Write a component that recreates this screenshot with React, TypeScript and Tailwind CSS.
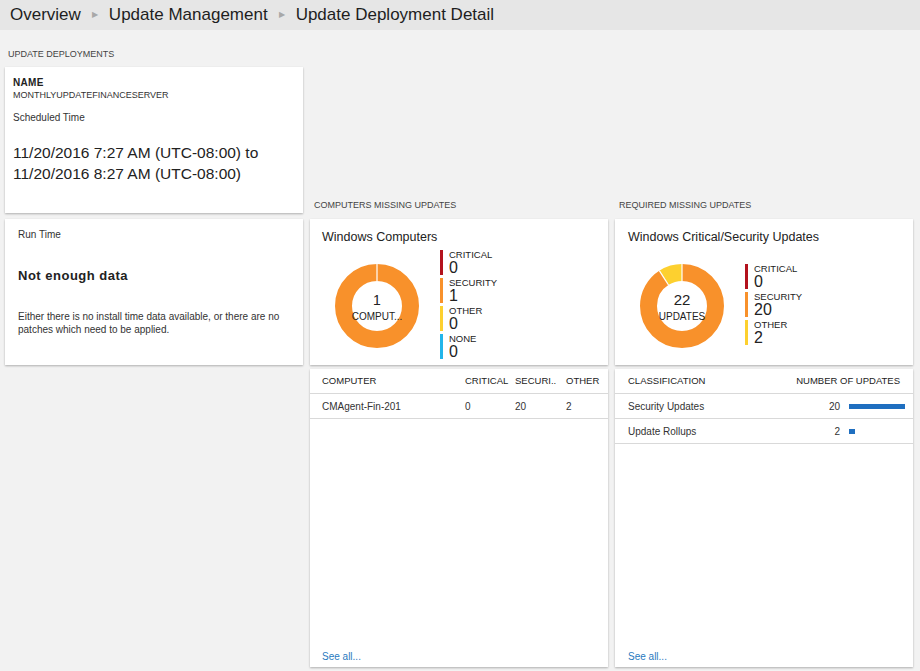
import React from 'react';

const ORANGE = '#f8912b';
const RED = '#b3121d';
const YELLOW = '#fdd02f';
const BLUE = '#22b5ea';

interface Segment {
  value: number;
  color: string;
}

const Donut: React.FC<{ segments: Segment[]; big: string; small: string; bigSize: string }> = ({
  segments,
  big,
  small,
  bigSize,
}) => {
  const r = 33.5;
  const c = 2 * Math.PI * r;
  const total = segments.reduce((s, x) => s + x.value, 0);
  let offset = 0;
  return (
    <div className="relative h-[84px] w-[84px] shrink-0">
      <svg width="84" height="84" viewBox="0 0 84 84" className="-rotate-90">
        {segments.map((seg, i) => {
          const len = (seg.value / total) * c;
          const el = (
            <circle
              key={i}
              cx="42"
              cy="42"
              r={r}
              fill="none"
              stroke={seg.color}
              strokeWidth="17"
              strokeDasharray={`${len} ${c - len}`}
              strokeDashoffset={-offset}
            />
          );
          offset += len;
          return el;
        })}
        {/* separators */}
        {(() => {
          let acc = 0;
          return segments.map((seg, i) => {
            const a = (acc / total) * 2 * Math.PI;
            acc += seg.value;
            return (
              <line
                key={i}
                x1={42 + 25 * Math.cos(a)}
                y1={42 + 25 * Math.sin(a)}
                x2={42 + 42 * Math.cos(a)}
                y2={42 + 42 * Math.sin(a)}
                stroke="#fff"
                strokeWidth="1.2"
              />
            );
          });
        })()}
      </svg>
      <div className="absolute inset-0 flex flex-col items-center justify-center pt-[2px] text-[#222]">
        <div className={`${bigSize} leading-[16px]`}>{big}</div>
        <div className="mt-[3px] text-[10px] leading-[12px]">{small}</div>
      </div>
    </div>
  );
};

const LegendItem: React.FC<{ label: string; value: number; color: string }> = ({ label, value, color }) => (
  <div className="flex h-[28px] items-start">
    <div className="h-[25px] w-[3px]" style={{ backgroundColor: color }} />
    <div className="ml-[6px] flex flex-col text-[#222]">
      <span className="text-[9.5px] leading-[10px]">{label}</span>
      <span className="text-[16px] leading-[15px]">{value}</span>
    </div>
  </div>
);

const Card: React.FC<{ className?: string; children: React.ReactNode }> = ({ className = '', children }) => (
  <div className={`bg-white shadow-[0_1px_2px_rgba(0,0,0,0.28)] ${className}`}>{children}</div>
);

const SectionLabel: React.FC<{ children: React.ReactNode; className?: string }> = ({ children, className = '' }) => (
  <div className={`text-[9px] leading-[14px] text-[#444] ${className}`}>{children}</div>
);

export default function App() {
  return (
    <div className="min-h-[671px] w-[920px] bg-[#f2f2f2] font-['Liberation_Sans',Arial,sans-serif] text-[#222]">
      {/* breadcrumb header */}
      <div className="flex h-[30px] items-center bg-[#e6e6e6] pl-[10px] text-[17px] text-[#1e1e1e]">
        <span>Overview</span>
        <span className="mx-[11px] text-[8px] text-[#a8a8a8]">▶</span>
        <span>Update Management</span>
        <span className="mx-[11px] text-[8px] text-[#a8a8a8]">▶</span>
        <span>Update Deployment Detail</span>
      </div>

      <div className="flex gap-[7px] pl-[5px]">
        {/* left column */}
        <div className="flex w-[298px] flex-col">
          <SectionLabel className="ml-[3px] mb-[6px] mt-[17px]">UPDATE DEPLOYMENTS</SectionLabel>
          <Card className="h-[146px] px-[8px] pt-[10px]">
            <div className="text-[10px] font-bold leading-[12px] tracking-[0.3px] text-[#222]">NAME</div>
            <div className="text-[9px] leading-[13px] text-[#333]">MONTHLYUPDATEFINANCESERVER</div>
            <div className="mt-[9px] text-[10px] leading-[13px] text-[#333]">Scheduled Time</div>
            <div className="mt-[18px] text-[15.5px] leading-[21px] text-[#222]">
              11/20/2016 7:27 AM (UTC-08:00) to
              <br />
              11/20/2016 8:27 AM (UTC-08:00)
            </div>
          </Card>
          <Card className="mt-[6px] h-[146px] px-[13px] pt-[9px]">
            <div className="text-[10px] leading-[13px] text-[#333]">Run Time</div>
            <div className="mt-[27px] text-[13px] font-bold leading-[16px] tracking-[0.5px] text-[#222]">
              Not enough data
            </div>
            <div className="mt-[26px] text-[10px] leading-[13px] text-[#333]">
              Either there is no install time data available, or there are no patches which need to be applied.
            </div>
          </Card>
        </div>

        {/* middle column */}
        <div className="flex w-[298px] flex-col">
          <SectionLabel className="ml-[4px] mb-[7px] mt-[168px]">COMPUTERS MISSING UPDATES</SectionLabel>
          <Card className="h-[146px] px-[12px] pt-[10px]">
            <div className="text-[12.5px] leading-[16px]">Windows Computers</div>
            <div className="mt-[5px] flex h-[112px] items-center">
              <div className="ml-[13px]">
                <Donut segments={[{ value: 1, color: ORANGE }]} big="1" small="COMPUT..." bigSize="text-[14px]" />
              </div>
              <div className="ml-[21px] flex flex-col">
                <LegendItem label="CRITICAL" value={0} color={RED} />
                <LegendItem label="SECURITY" value={1} color={ORANGE} />
                <LegendItem label="OTHER" value={0} color={YELLOW} />
                <LegendItem label="NONE" value={0} color={BLUE} />
              </div>
            </div>
          </Card>
          <Card className="mt-[4px] flex h-[298px] flex-col">
            <div className="grid h-[25px] grid-cols-[143px_50px_51px_1fr] items-center border-b border-[#d9d9d9] pl-[12px] text-[9.5px] text-[#222]">
              <span>COMPUTER</span>
              <span>CRITICAL</span>
              <span>SECURI..</span>
              <span>OTHER</span>
            </div>
            <div className="grid h-[25px] grid-cols-[143px_50px_51px_1fr] items-center border-b border-[#d9d9d9] pl-[12px] text-[10px] text-[#333]">
              <span>CMAgent-Fin-201</span>
              <span>0</span>
              <span>20</span>
              <span>2</span>
            </div>
            <div className="mt-auto pb-[4px] pl-[12px] text-[10px] leading-[13px] text-[#2a7ac0]">See all...</div>
          </Card>
        </div>

        {/* right column */}
        <div className="flex w-[298px] flex-col">
          <SectionLabel className="ml-[4px] mb-[7px] mt-[168px]">REQUIRED MISSING UPDATES</SectionLabel>
          <Card className="h-[146px] px-[13px] pt-[10px]">
            <div className="text-[12.5px] leading-[16px]">Windows Critical/Security Updates</div>
            <div className="mt-[5px] flex h-[112px] items-center">
              <div className="ml-[12px]">
                <Donut
                  segments={[
                    { value: 20, color: ORANGE },
                    { value: 2, color: YELLOW },
                  ]}
                  big="22"
                  small="UPDATES"
                  bigSize="text-[15px]"
                />
              </div>
              <div className="ml-[21px] flex flex-col">
                <LegendItem label="CRITICAL" value={0} color={RED} />
                <LegendItem label="SECURITY" value={20} color={ORANGE} />
                <LegendItem label="OTHER" value={2} color={YELLOW} />
              </div>
            </div>
          </Card>
          <Card className="mt-[4px] flex h-[298px] flex-col">
            <div className="flex h-[25px] items-center justify-between border-b border-[#d9d9d9] pl-[13px] pr-[13px] text-[9.5px] text-[#222]">
              <span>CLASSIFICATION</span>
              <span>NUMBER OF UPDATES</span>
            </div>
            {[
              { name: 'Security Updates', count: 20 },
              { name: 'Update Rollups', count: 2 },
            ].map((row) => (
              <div
                key={row.name}
                className="flex h-[25px] items-center border-b border-[#d9d9d9] pl-[13px] pr-[8px] text-[10px] text-[#333]"
              >
                <span className="flex-1">{row.name}</span>
                <span>{row.count}</span>
                <div className="ml-[9px] w-[56px]">
                  <div className="h-[5px] bg-[#1f6fc0]" style={{ width: `${Math.max(5, (row.count / 20) * 56)}px` }} />
                </div>
              </div>
            ))}
            <div className="mt-auto pb-[4px] pl-[13px] text-[10px] leading-[13px] text-[#2a7ac0]">See all...</div>
          </Card>
        </div>
      </div>
    </div>
  );
}
